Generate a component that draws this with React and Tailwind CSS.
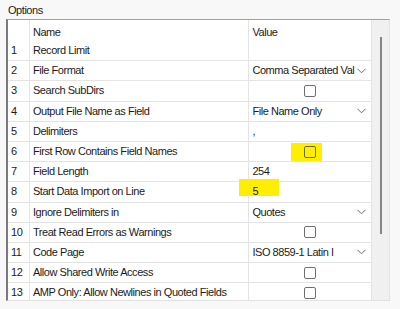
import React from 'react'

const rows = [
  { n: 1, name: 'Record Limit', kind: 'blank' },
  { n: 2, name: 'File Format', kind: 'select', value: 'Comma Separated Val' },
  { n: 3, name: 'Search SubDirs', kind: 'check' },
  { n: 4, name: 'Output File Name as Field', kind: 'select', value: 'File Name Only' },
  { n: 5, name: 'Delimiters', kind: 'text', value: ',' },
  { n: 6, name: 'First Row Contains Field Names', kind: 'check', mark: true },
  { n: 7, name: 'Field Length', kind: 'text', value: '254' },
  { n: 8, name: 'Start Data Import on Line', kind: 'text', value: '5', mark: true },
  { n: 9, name: 'Ignore Delimiters in', kind: 'select', value: 'Quotes' },
  { n: 10, name: 'Treat Read Errors as Warnings', kind: 'check' },
  { n: 11, name: 'Code Page', kind: 'select', value: 'ISO 8859-1 Latin I' },
  { n: 12, name: 'Allow Shared Write Access', kind: 'check' },
  { n: 13, name: 'AMP Only: Allow Newlines in Quoted Fields', kind: 'check' },
]

function Chevron() {
  return (
    <svg width="9" height="6" viewBox="0 0 9 6" className="shrink-0">
      <path d="M0.5 0.8 L4.5 4.8 L8.5 0.8" fill="none" stroke="#6b6b6b" strokeWidth="1" />
    </svg>
  )
}

function Checkbox({ mark }) {
  return (
    <div className="relative flex h-full w-full items-center justify-center">
      {mark && <div className="absolute left-[42px] top-[1px] h-[18px] w-[31px] bg-[#ffee00]" />}
      <div
        className={`relative h-[12px] w-[12px] rounded-[2px] border ${
          mark ? 'border-[#6b6b20] bg-[#ffee00]' : 'border-[#6e6e6e] bg-white'
        }`}
      />
    </div>
  )
}

function Value({ row }) {
  if (row.kind === 'select') {
    return (
      <div className="flex h-full items-center pl-[3px] pr-[5px]">
        <span className="whitespace-nowrap">{row.value}</span>
        <div className="ml-auto">
          <Chevron />
        </div>
      </div>
    )
  }
  if (row.kind === 'check') return <Checkbox mark={row.mark} />
  if (row.kind === 'text') {
    return (
      <div className="relative flex h-full items-center pl-[3px]">
        {row.mark && <div className="absolute left-[-10px] top-[-3px] h-[17px] w-[40px] bg-[#ffee00]" />}
        <span className="relative">{row.value}</span>
      </div>
    )
  }
  return null
}

export default function App() {
  return (
    <div
      className="h-[309px] w-[400px] overflow-hidden bg-[#f8f8f8] text-[11px] tracking-[-0.45px] text-[#1b1b1b]"
      style={{ fontFamily: '"Liberation Sans", Arial, sans-serif' }}
    >
      <div className="h-[19px] pl-[8px] pt-[4px] leading-[13px]">Options</div>
      <div className="ml-[6px] flex h-[282px] w-[384px] border-l-2 border-t border-b border-r border-l-[#7a7a7a] border-t-[#a0a0a0] border-b-[#e2e2e2] border-r-[#e2e2e2] bg-white">
        <div className="w-[366px] overflow-hidden">
          <div className="flex h-[21px]">
            <div className="w-[22px] border-r border-[#e3e3e3]" />
            <div className="w-[220px] border-r border-[#e3e3e3] pl-[3px] pt-[6px] leading-[13px]">Name</div>
            <div className="w-[123px] border-r border-[#e3e3e3] pl-[3px] pt-[6px] leading-[13px]">Value</div>
          </div>
          {rows.map((row) => (
            <div key={row.n} className="flex h-[20.2px] border-b border-[#e3e3e3] leading-[13px]">
              <div className="flex w-[22px] items-center border-r border-[#e3e3e3] pl-[3px]">{row.n}</div>
              <div className="flex w-[220px] items-center overflow-hidden whitespace-nowrap border-r border-[#e3e3e3] pl-[3px]">
                {row.name}
              </div>
              <div className="w-[123px] border-r border-[#e3e3e3]">
                <Value row={row} />
              </div>
            </div>
          ))}
        </div>
        <div className="flex w-[17px] justify-center bg-[#f0f0f0] pt-[17px]">
          <div className="h-[197px] w-[2px] bg-[#858585]" />
        </div>
      </div>
    </div>
  )
}
